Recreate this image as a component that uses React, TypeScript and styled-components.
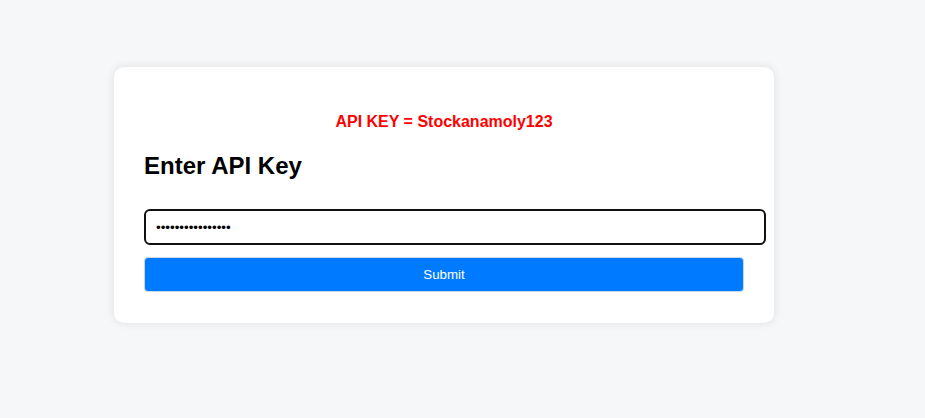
import styled, { createGlobalStyle } from "styled-components";

const GlobalStyle = createGlobalStyle`
  html, body {
    margin: 0;
    padding: 0;
    background: #f6f7f9;
    font-family: "Liberation Sans", Arial, sans-serif;
  }
`;

const Page = styled.div`
  min-height: 418px;
  padding: 67px 0 0 114px;
  box-sizing: border-box;
`;

const Card = styled.div`
  width: 660px;
  box-sizing: border-box;
  padding: 30px 30px 31px;
  background: #ffffff;
  border-radius: 10px;
  box-shadow: 0 0 10px rgba(0, 0, 0, 0.1);
`;

const KeyNote = styled.p`
  margin: 16px 0 0;
  text-align: center;
  color: #ff0000;
  font-size: 16px;
  font-weight: bold;
  line-height: 18px;
`;

const Title = styled.h2`
  margin: 21px 0 0;
  font-size: 24px;
  font-weight: bold;
  line-height: 28px;
  color: #000;
`;

const Form = styled.form`
  margin-top: 29px;
  display: flex;
  flex-direction: column;
  gap: 12px;
`;

const KeyInput = styled.input`
  width: 622px;
  height: 36px;
  box-sizing: border-box;
  padding: 0 10px;
  border: 2px solid #111;
  border-radius: 6px;
  font-family: "Liberation Sans", Arial, sans-serif;
  font-size: 13.33px;
  outline: none;
  background: #fff;
`;

const SubmitButton = styled.button`
  width: 600px;
  height: 35px;
  box-sizing: border-box;
  border: 1px solid #c8d6e6;
  border-radius: 4px;
  background: #007bff;
  color: #fff;
  font-family: "Liberation Sans", Arial, sans-serif;
  font-size: 13.33px;
  cursor: pointer;
`;

export default function App() {
  return (
    <>
      <GlobalStyle />
      <Page>
        <Card>
          <KeyNote>API KEY = Stockanamoly123</KeyNote>
          <Title>Enter API Key</Title>
          <Form onSubmit={(e) => e.preventDefault()}>
            <KeyInput type="password" defaultValue="Stockanamoly1234" />
            <SubmitButton type="submit">Submit</SubmitButton>
          </Form>
        </Card>
      </Page>
    </>
  );
}
